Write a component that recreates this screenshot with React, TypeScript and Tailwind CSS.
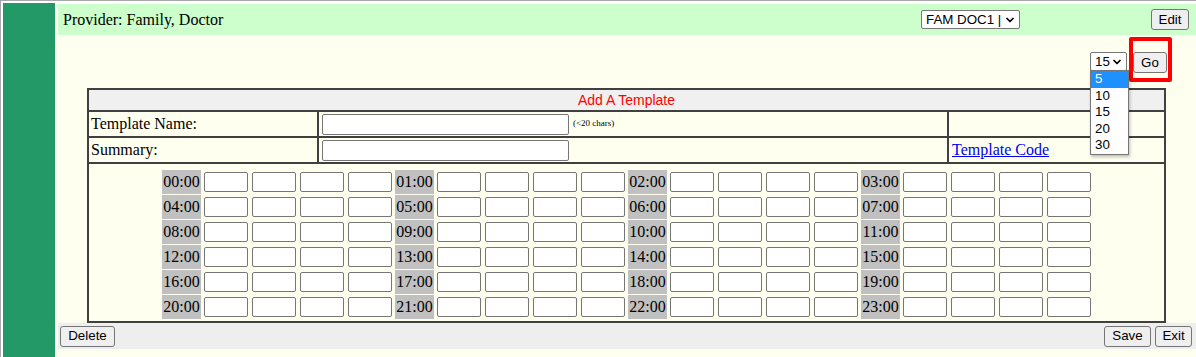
import React from 'react';
import { ChevronDown } from 'lucide-react';

const serif = { fontFamily: '"Liberation Serif", "Times New Roman", serif' };

const hours = Array.from({ length: 24 }, (_, i) => `${String(i).padStart(2, '0')}:00`);

const Btn = ({ label, className = '' }: { label: string; className?: string }) => (
  <button className={`h-[21px] px-[6px] bg-[#efefef] border border-[#767676] rounded-[3px] text-[13.33px] leading-none text-black font-['Liberation_Sans',Arial,sans-serif] ${className}`}>
    {label}
  </button>
);

const Select = ({ value, className = '' }: { value: string; className?: string }) => (
  <div className={`h-[19px] flex items-center justify-between bg-white border border-[#767676] rounded-[2px] pl-[4px] pr-[3px] text-[13.33px] text-black font-['Liberation_Sans',Arial,sans-serif] ${className}`}>
    <span>{value}</span>
    <ChevronDown className="w-[12px] h-[12px]" strokeWidth={3.5} />
  </div>
);

const Cell = ({ className = '' }: { className?: string }) => (
  <div className={`w-[44px] h-[20px] bg-white border border-[#767676] rounded-[2px] ${className}`} />
);

export default function App() {
  return (
    <div className="h-screen flex flex-col bg-white border-t border-l border-[#a8a8a8] pt-[2px] pl-[2px] overflow-hidden" style={serif}>
      <div className="flex flex-1">
        {/* sidebar */}
        <div className="w-[52px] bg-[#229966]" />

        <div className="flex-1 bg-[#fffff0] pt-[1px]">
          {/* provider bar */}
          <div className="ml-[3px] h-[31px] bg-[#ccffcc] flex items-center justify-between pl-[5px] pr-[7px]">
            <span className="text-[16px] text-black">Provider: Family, Doctor</span>
            <div className="flex items-center">
              <Select value="FAM DOC1 |" className="w-[99px]" />
              <Btn label="Edit" className="ml-[131px] w-[38px] h-[20px]" />
            </div>
          </div>

          {/* interval picker */}
          <div className="mt-[16px] h-[21px] flex items-center justify-end pr-[29px]">
            <div className="relative">
              <Select value="15" className="w-[37px]" />
              <div className="absolute left-0 top-[18px] w-[39px] bg-white border border-[#767676] shadow-[1px_2px_3px_rgba(0,0,0,0.25)] z-10 text-[13.33px] text-black font-['Liberation_Sans',Arial,sans-serif]">
                {['5', '10', '15', '20', '30'].map((v, i) => (
                  <div key={v} className={`h-[16.6px] leading-[16.6px] pl-[4px] ${i === 0 ? 'bg-[#1e90ff] text-white' : ''}`}>{v}</div>
                ))}
              </div>
            </div>
            <div className="relative ml-[6px]">
              <Btn label="Go" className="w-[34px]" />
              <div className="absolute -left-[4px] -top-[13px] w-[43px] h-[45px] border-[4px] border-[#ff0000] rounded-[2px]" />
            </div>
          </div>

          {/* template table */}
          <div className="mt-[16px] ml-[32px] w-[1079px] border-2 border-[#404040] text-black">
            <div className="h-[22px] bg-[#f0f0f0] border-b-2 border-[#404040] flex items-center justify-center">
              <span className="text-[14px] text-[#ff0000] font-['Liberation_Sans',Arial,sans-serif]">Add A Template</span>
            </div>

            <div className="grid grid-cols-[230px_630px_215px] border-b-2 border-[#404040] h-[26px]">
              <div className="border-r-2 border-[#404040] flex items-center pl-[2px] text-[16px]">Template Name:</div>
              <div className="border-r-2 border-[#404040] flex items-center pl-[3px]">
                <div className="w-[247px] h-[21px] bg-white border border-[#767676] rounded-[2px]" />
                <span className="ml-[4px] text-[9px]">(&lt;20 chars)</span>
              </div>
              <div />
            </div>

            <div className="grid grid-cols-[230px_630px_215px] border-b-2 border-[#404040] h-[26px]">
              <div className="border-r-2 border-[#404040] flex items-center pl-[2px] text-[16px]">Summary:</div>
              <div className="border-r-2 border-[#404040] flex items-center pl-[3px]">
                <div className="w-[247px] h-[21px] bg-white border border-[#767676] rounded-[2px]" />
              </div>
              <div className="flex items-center pl-[3px]">
                <a href="#" className="text-[16px] text-[#0000ee] underline">Template Code</a>
              </div>
            </div>

            <div className="pt-[6px] pb-[2px] flex flex-col items-center gap-[1px]">
              {[0, 1, 2, 3, 4, 5].map((r) => (
                <div key={r} className="flex gap-[3px]">
                  {[0, 1, 2, 3].map((c) => (
                    <div key={c} className="flex items-center">
                      <div className="w-[39px] h-[24px] bg-[#c0c0c0] flex items-center justify-center text-[16px]">
                        {hours[r * 4 + c]}
                      </div>
                      <div className="ml-[3px] flex gap-[4px]">
                        <Cell />
                        <Cell />
                        <Cell />
                        <Cell />
                      </div>
                    </div>
                  ))}
                </div>
              ))}
            </div>
          </div>

          {/* action bar */}
          <div className="ml-[3px] h-[26px] bg-[#eeeeee] flex items-center justify-between pl-[2px] pr-[4px]">
            <Btn label="Delete" className="w-[55px] h-[20px]" />
            <div className="flex gap-[4px]">
              <Btn label="Save" className="w-[47px] h-[20px]" />
              <Btn label="Exit" className="w-[37px] h-[20px]" />
            </div>
          </div>
        </div>
      </div>
    </div>
  );
}
